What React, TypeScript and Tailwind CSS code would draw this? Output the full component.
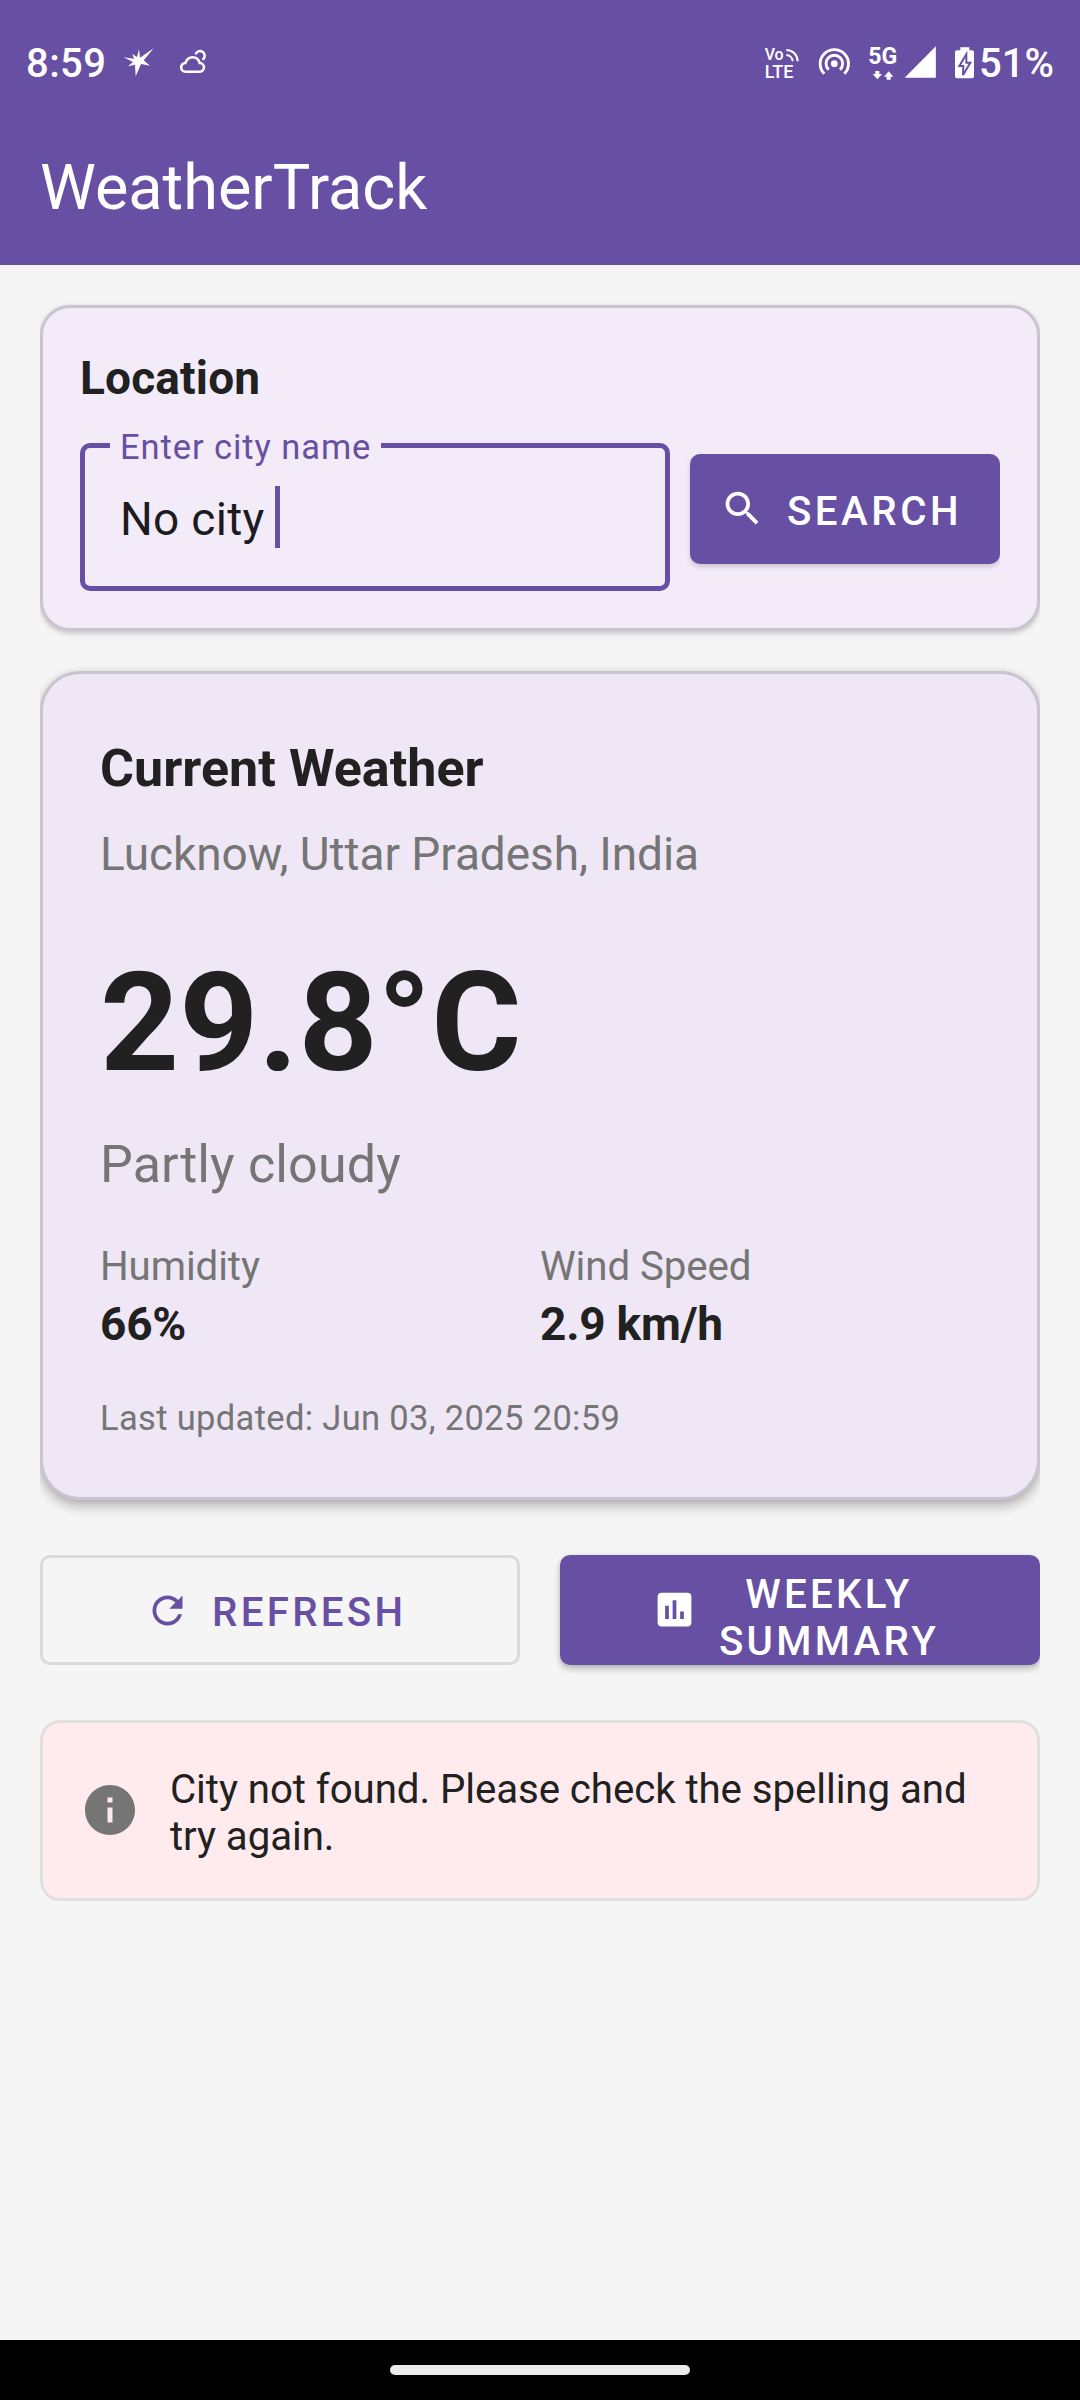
import type { ReactNode } from 'react';

function StatusBar() {
  return (
    <div className="flex h-[110px] items-center pt-[18px] pl-[26px] text-[40px] leading-[48px] font-medium">
      <span className="w-[94px] tracking-[0.4px]">8:59</span>
      <svg className="h-10 w-[37px]" viewBox="360 72 111 120" fill="white">
        <polygon points="461,85 431,121 450,137 423,132 407,169 405,134 384,139 399,126 371,112 402,116 397,102 411,111 417,88 420,113" />
      </svg>
      <svg
        className="ml-[22px] h-10 w-[29px]"
        viewBox="537 72 87 120"
        fill="none"
        stroke="white"
        strokeWidth="7.5"
        strokeLinecap="round"
      >
        <path d="M557 155a13 13 0 0 1 -1 -26c4 -10 12 -17 22 -17s18 6 21 17a13 13 0 0 1 0 26z" />
        <path d="M588 100a14 14 0 1 1 22 17" />
      </svg>
      <div className="ml-auto flex w-[316px] items-center">
        <svg className="h-10 w-9 shrink-0 overflow-visible" viewBox="72 72 108 120" fill="white">
          <text x="74" y="119" fontFamily="Roboto" fontSize="48" fontWeight="500" textLength="57" lengthAdjust="spacingAndGlyphs">Vo</text>
          <text x="74" y="174" fontFamily="Roboto" fontSize="55" fontWeight="500" textLength="86" lengthAdjust="spacingAndGlyphs">LTE</text>
          <path d="M139 90a34 34 0 0 1 34 34M139 105a19 19 0 0 1 19 19" fill="none" stroke="white" strokeWidth="6" />
        </svg>
        <svg className="ml-4 h-10 w-9 shrink-0" viewBox="228 72 108 120" fill="none" stroke="white" strokeWidth="8.5">
          <circle cx="283" cy="131" r="10" fill="white" stroke="none" />
          <path d="M253 161.500A42.500 42.500 0 1 1 313 161.500M266 149A25 25 0 1 1 300 149" />
        </svg>
        <svg className="ml-4 h-10 w-[69px] shrink-0 overflow-visible" viewBox="384 72 207 120" fill="white">
          <text x="385" y="131" fontFamily="Roboto" fontSize="71" fontWeight="700" textLength="87" lengthAdjust="spacingAndGlyphs">5G</text>
          <path d="M406 153h12v9h8l-14 16l-14-16h8zM440 179h12v-9h8l-14-16l-14 16h8zM494 173.500H587.500V79z" />
        </svg>
        <svg className="ml-[17px] h-10 w-[21px] shrink-0" viewBox="642 72 63 120" fill="white">
          <path d="M661 82h27v9h8a6 6 0 0 1 6 6v72a6 6 0 0 1 -6 6h-45a6 6 0 0 1 -6 -6v-72a6 6 0 0 1 6 -6h10z" />
          <path d="M679 103L658 138H670L669 165L691 128H679z" stroke="#6750A3" strokeWidth="6" />
        </svg>
        <span className="ml-1">51%</span>
      </div>
    </div>
  );
}

function Icon({ d, className }: { d: string; className: string }) {
  return (
    <svg className={className} viewBox="0 0 24 24" fill="currentColor">
      <path d={d} />
    </svg>
  );
}

const SEARCH =
  'M15.5 14h-.79l-.28-.27C15.41 12.59 16 11.11 16 9.500 16 5.910 13.090 3 9.500 3S3 5.910 3 9.500 5.910 16 9.500 16c1.610 0 3.090-.59 4.230-1.570l.27.28v.79l5 4.990L20.490 19l-4.990-5zm-6 0C7.010 14 5 11.990 5 9.500S7.010 5 9.500 5 14 7.010 14 9.500 11.990 14 9.500 14z';
const REFRESH =
  'M17.650 6.350C16.200 4.900 14.210 4 12 4c-4.420 0-7.990 3.580-7.990 8s3.570 8 7.990 8c3.730 0 6.840-2.550 7.730-6h-2.080c-.82 2.330-3.040 4-5.650 4-3.310 0-6-2.690-6-6s2.690-6 6-6c1.660 0 3.140.69 4.220 1.780L13 11h7V4l-2.350 2.350z';
const ASSESSMENT =
  'M19 3H5c-1.100 0-2 .9-2 2v14c0 1.100.9 2 2 2h14c1.100 0 2-.9 2-2V5c0-1.100-.9-2-2-2zM9 17H7v-7h2v7zm4 0h-2V7h2v10zm4 0h-2v-4h2v4z';
const INFO = 'M12 2C6.480 2 2 6.480 2 12s4.480 10 10 10 10-4.480 10-10S17.520 2 12 2zm1 15h-2v-6h2v6zm0-8h-2V7h2v2z';

function LocationCard() {
  return (
    <section className="h-[326px] rounded-[30px] border-[3px] border-[#CAC4D0] bg-[#F3EBF8] px-[37px] pt-[43px] shadow-[0_3px_5px_rgba(0,0,0,0.15),0_0_4px_rgba(0,0,0,0.08)]">
      <h2 className="text-[46px] leading-[54px] font-bold tracking-[0.17px]">Location</h2>
      <div className="mt-[38px] flex items-start gap-3">
        <div className="relative flex h-[148px] w-[590px] items-center rounded-[10px] border-[5px] border-[#6750A3] pl-[35px]">
          <span className="absolute -top-[21px] left-[25px] h-[42px] w-[271px] bg-[#F3EBF8] pl-[10px] text-[34.5px] leading-10 tracking-[0.92px] whitespace-nowrap text-[#6750A3]">
            Enter city name
          </span>
          <span className="w-[155px] pt-1 text-[46px] leading-[54px] tracking-[0.3px] text-[#1C1B1F]">No city</span>
          <span className="h-[62px] w-[5px] bg-[#6750A3]" />
        </div>
        <div className="overflow-x-clip pt-[11px] pl-2">
          <button className="flex h-[110px] w-[310px] items-center rounded-[10px] bg-[#6750A3] pl-[30px] text-white shadow-[0_3px_5px_rgba(0,0,0,0.16)]">
            <Icon d={SEARCH} className="-mt-px size-[45px]" />
            <span className="ml-[22px] pt-[4px] text-[40.25px] leading-[47px] font-medium tracking-[3.5px]">SEARCH</span>
          </button>
        </div>
      </div>
    </section>
  );
}

function Metric({ label, children }: { label: string; children: ReactNode }) {
  return (
    <div>
      <p className="text-[40.25px] leading-[48px] tracking-[-0.1px] text-[#757575]">{label}</p>
      <p className="mt-[6px] text-[46px] leading-[54px] font-bold tracking-[-0.25px]">{children}</p>
    </div>
  );
}

function WeatherCard() {
  return (
    <section className="mt-10 h-[829px] rounded-[40px] border-[3px] border-[#CAC4D0] bg-[#EFE7F6] px-[57px] pt-[65px] shadow-[0_7px_12px_rgba(0,0,0,0.24),0_0_7px_rgba(0,0,0,0.1)]">
      <h2 className="text-[52px] leading-[60px] font-bold tracking-[0.05px]">Current Weather</h2>
      <p className="mt-[28px] text-[46px] leading-[54px] tracking-[-0.07px] text-[#757575]">Lucknow, Uttar Pradesh, India</p>
      <p className="mt-[61px] text-[138px] leading-[162px] font-bold">29.8°C</p>
      <p className="mt-[31px] text-[52px] leading-[60px] tracking-[0.15px] text-[#757575]">Partly cloudy</p>
      <div className="mt-12 grid grid-cols-2">
        <Metric label="Humidity">66%</Metric>
        <Metric label="Wind Speed">2.9 km/h</Metric>
      </div>
      <p className="mt-[47px] text-[34.5px] leading-10 tracking-[0.34px] text-[#757575]">
        Last updated: Jun 03, 2025 20:59
      </p>
    </section>
  );
}

function Actions() {
  return (
    <div className="mt-[55px] grid grid-cols-2 gap-10">
      <button className="flex h-[110px] items-center rounded-[10px] border-[3px] border-[#DADADA] pl-[102px] text-[#6750A3]">
        <Icon d={REFRESH} className="size-[45px]" />
        <span className="ml-[22px] pt-[5px] text-[40.25px] leading-[47px] font-medium tracking-[3.3px]">REFRESH</span>
      </button>
      <button className="flex h-[110px] items-start rounded-[10px] bg-[#6750A3] pl-[92px] text-white shadow-[0_4px_6px_rgba(0,0,0,0.24),0_0_4px_rgba(0,0,0,0.08)]">
        <Icon d={ASSESSMENT} className="mt-8 size-[45px]" />
        <span className="mt-4 ml-[20px] w-[224px] text-center text-[40.25px] leading-[47px] font-medium tracking-[3.3px]">
          WEEKLY
          <br />
          SUMMARY
        </span>
      </button>
    </div>
  );
}

function ErrorBanner() {
  return (
    <section className="mt-[55px] flex h-[181px] items-start rounded-[20px] border-[3px] border-[#E0E0E0] bg-[#FFEBEE] pl-[37px]">
      <Icon d={INFO} className="mt-[57px] size-[60px] shrink-0 text-[#757575]" />
      <p className="mt-[43px] ml-[30px] w-[810px] text-[40.25px] leading-[47px] tracking-[-0.08px]">
        City not found. Please check the spelling and try again.
      </p>
    </section>
  );
}

export default function App() {
  return (
    <div className="flex h-[2400px] w-[1080px] flex-col bg-[#F5F5F5] font-['Roboto',sans-serif] text-[#212121]">
      <header className="h-[265px] bg-[#6750A3] text-white">
        <StatusBar />
        <h1 className="pl-10 text-[63px] leading-[155px]">WeatherTrack</h1>
      </header>
      <main className="mx-10 flex-1 overflow-x-clip pt-10">
        <LocationCard />
        <WeatherCard />
        <Actions />
        <ErrorBanner />
      </main>
      <footer className="flex h-[60px] items-center justify-center bg-black">
        <div className="h-[10px] w-[300px] rounded-full bg-[#EBEBEB]" />
      </footer>
    </div>
  );
}
